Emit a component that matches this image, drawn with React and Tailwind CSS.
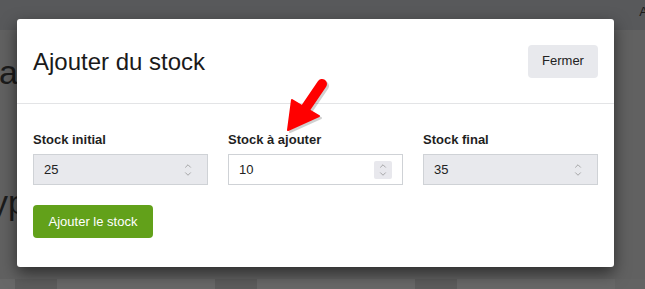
import { ChevronUp, ChevronDown } from "lucide-react";

function Spinner({ boxed }) {
  return (
    <span
      className={
        "flex flex-col items-center justify-center w-[18px] h-[18px] rounded-[2px] " +
        (boxed ? "bg-[#e8e8ed]" : "")
      }
    >
      <ChevronUp size={10} strokeWidth={1.5} className="text-[#7d7d7d] -mb-[1px]" />
      <ChevronDown size={10} strokeWidth={1.5} className="text-[#7d7d7d] -mt-[1px]" />
    </span>
  );
}

function Field({ label, value, disabled }) {
  return (
    <div className="flex flex-col">
      <label className="font-bold text-[13px] leading-[20px] text-[#1f1f1f] mb-1">{label}</label>
      <div
        className={
          "h-[31px] border border-[#cfd2d6] flex items-center justify-between pl-[10px] pr-[10px] text-[13px] text-[#222] " +
          (disabled ? "bg-[#e8e9ed]" : "bg-white")
        }
      >
        <span>{value}</span>
        <Spinner boxed={!disabled} />
      </div>
    </div>
  );
}

export default function App() {
  return (
    <div className="relative w-[645px] h-[289px] overflow-hidden bg-[#616161] font-['Liberation_Sans',Arial,sans-serif]">
      {/* dimmed page behind the modal */}
      <div className="h-[30px] bg-[#58595b] flex justify-end items-start pt-[2px] text-[13px] text-[#1c1c1c]">
        <span className="-mr-[3px]">A</span>
      </div>
      <div className="text-[34px] leading-[40px] text-[#1b1b1b] mt-[22px] -ml-[1px]">a</div>
      <div className="text-[34px] leading-[40px] text-[#1b1b1b] mt-[90px] -ml-[9px]">yp</div>
      <div className="flex mt-[57px] h-[20px]">
        <div className="w-[15px] bg-[#686868]"></div>
        <div className="w-[42px] bg-[#5c5c5c]"></div>
        <div className="w-[158px] bg-[#686868]"></div>
        <div className="w-[42px] bg-[#5c5c5c]"></div>
        <div className="w-[158px] bg-[#686868]"></div>
        <div className="w-[42px] bg-[#5c5c5c]"></div>
        <div className="w-[158px] bg-[#686868]"></div>
        <div className="flex-1 bg-[#636363]"></div>
      </div>

      {/* modal */}
      <div className="absolute inset-0">
        <div className="ml-[17px] mt-[19px] w-[597px] bg-white rounded-[3px] shadow-[0_6px_16px_rgba(0,0,0,0.55)]">
          <div className="h-[85px] px-4 flex items-center justify-between border-b border-[#e3e4e6]">
            <h2 className="text-[24px] text-[#1a1a1a] mt-[2px]">Ajouter du stock</h2>
            <button className="h-[33px] w-[70px] rounded-[4px] bg-[#e8e9ed] text-[13px] text-[#222]">
              Fermer
            </button>
          </div>
          <div className="px-4 pt-[26px] pb-[29px]">
            <div className="grid grid-cols-3 gap-[20px]">
              <Field label="Stock initial" value="25" disabled />
              <Field label="Stock à ajouter" value="10" />
              <Field label="Stock final" value="35" disabled />
            </div>
            <button className="mt-[20px] h-[33px] w-[120px] rounded-[4px] bg-[#62a11a] text-white text-[13px]">
              Ajouter le stock
            </button>
          </div>
        </div>
      </div>

      {/* red annotation arrow */}
      <svg className="absolute left-[280px] top-[76px]" width="50" height="60" viewBox="0 0 50 60">
        <g transform="translate(2,2)" fill="#000" stroke="#000" opacity="0.18">
          <line x1="42" y1="8" x2="25" y2="33" strokeWidth="10" strokeLinecap="round" />
          <polygon points="12,24 39,40 8,54" strokeWidth="2" strokeLinejoin="round" />
        </g>
        <line x1="42" y1="8" x2="25" y2="33" stroke="#ff0000" strokeWidth="10" strokeLinecap="round" />
        <polygon points="12,24 39,40 8,54" fill="#ff0000" stroke="#ff0000" strokeWidth="2" strokeLinejoin="round" />
      </svg>
    </div>
  );
}
